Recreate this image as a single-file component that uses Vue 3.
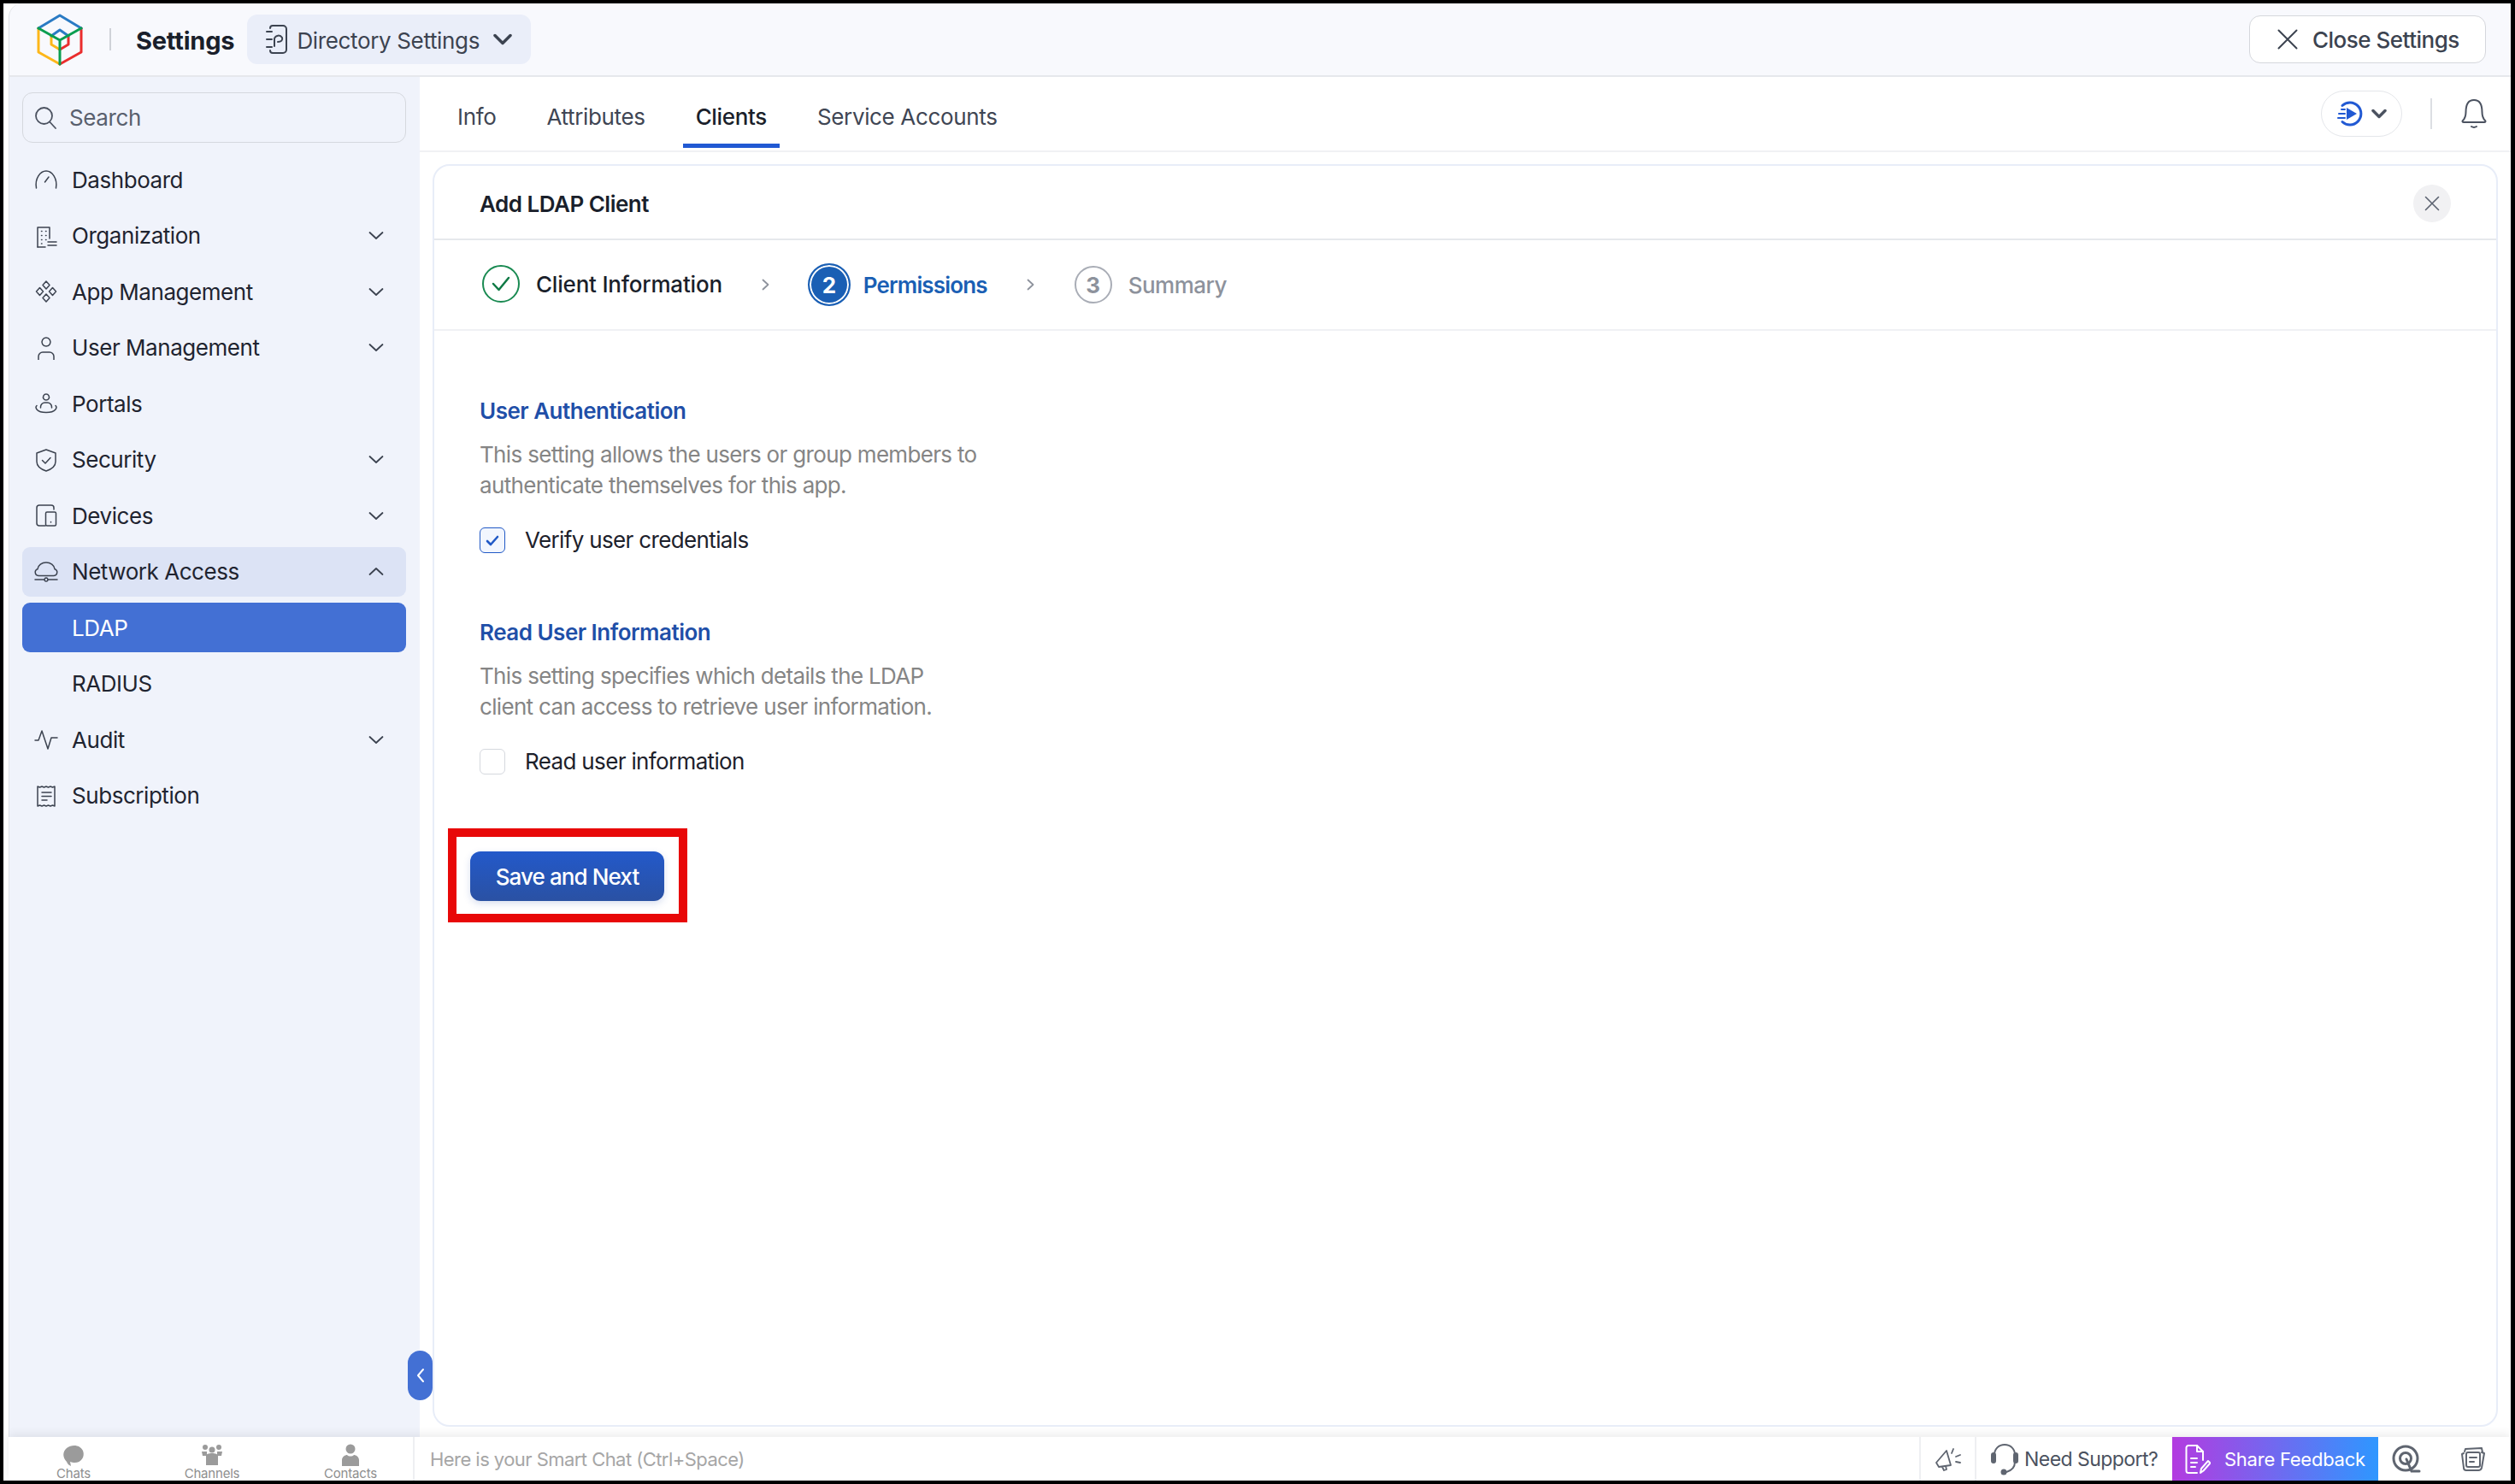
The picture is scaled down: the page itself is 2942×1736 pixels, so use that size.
<script setup>
const icons = {
  dash: ['M2.500 24C.5 13 7 4 14 4s13.500 9 11.500 20', 'M12.500 17l4.500-6'],
  org: ['M4 27V4h14v13', 'M4 27h9', 'M8.500 8.500h.5M13.500 8.500h.5M8.500 13.500h.5M13.500 13.500h.5M8.500 18.500h.5M13.500 18.500h.5M8.500 23h.5', 'M16 21h10M16 25h10'],
  app: ['M14 2l4 4.500-4 4.500-4-4.500z', 'M6.500 9.500l4 4.500-4 4.500-4-4.500z', 'M21.500 9.500l4 4.500-4 4.500-4-4.500z', 'M14 17l4 4.500-4 4.500-4-4.500z'],
  user: ['M14 2a5 5 0 1 0 .01 0z', 'M5 28v-4a5 5 0 0 1 5-5h8a5 5 0 0 1 5 5v4'],
  portal: ['M14 3a3.500 3.500 0 1 0 .01 0z', 'M7.500 19v-1a5 5 0 0 1 5-5h3a5 5 0 0 1 5 5v1', 'M3 16.500c-2 2-1 8 11 8s13-6 11-8'],
  shield: ['M14 2l11 4v10c0 6-5 9-11 11C8 25 3 22 3 16V6z', 'M9.500 14.500l3.500 3.500 6-6.500'],
  device: ['M13 26H6a3 3 0 0 1-3-3V5a3 3 0 0 1 3-3h14a3 3 0 0 1 3 3v2', 'M15 10h9a1.500 1.500 0 0 1 1.500 1.500v13A1.500 1.500 0 0 1 24 26h-9a1.500 1.500 0 0 1-1.500-1.500v-13A1.500 1.500 0 0 1 15 10z', 'M19.500 21.500v.5'],
  cloud: ['M6 18.500H5a4 4 0 0 1-1-7.800C4.500 6 9 3 14 3s9.500 3 10 7.700a4 4 0 0 1-1 7.800z', 'M1 23h11M16 23h11', 'M14 21a2 2 0 1 0 .01 0z'],
  audit: ['M1 15h4l4-11 7 21 4-13h7'],
  receipt: ['M4 3l2.500 1 2.500-1 2.500 1 2.500-1 2.500 1 2.500-1 2.500 1 2.500-1v23l-2.500-1-2.500 1-2.500-1-2.500 1-2.500-1-2.500 1-2.500-1-2.500 1z', 'M9 10h11M9 14.500h11M9 19h6']
}

const nav = [
  { label: 'Dashboard', icon: 'dash' },
  { label: 'Organization', icon: 'org', caret: 'down' },
  { label: 'App Management', icon: 'app', caret: 'down' },
  { label: 'User Management', icon: 'user', caret: 'down' },
  { label: 'Portals', icon: 'portal' },
  { label: 'Security', icon: 'shield', caret: 'down' },
  { label: 'Devices', icon: 'device', caret: 'down' },
  { label: 'Network Access', icon: 'cloud', caret: 'up', open: true },
  { label: 'LDAP', active: true },
  { label: 'RADIUS' },
  { label: 'Audit', icon: 'audit', caret: 'down' },
  { label: 'Subscription', icon: 'receipt' }
]

const tabs = [
  { label: 'Info' },
  { label: 'Attributes' },
  { label: 'Clients', active: true },
  { label: 'Service Accounts' }
]

const sections = [
  { title: 'User Authentication', lines: ['This setting allows the users or group members to', 'authenticate themselves for this app.'], check: 'Verify user credentials', on: true },
  { title: 'Read User Information', lines: ['This setting specifies which details the LDAP', 'client can access to retrieve user information.'], check: 'Read user information', on: false }
]
</script>

<template>
  <div class="shell">
    <div class="window">
      <header class="topbar">
        <svg class="logo" viewBox="43 17 54 61" width="54" height="61" fill="none" stroke-width="3" stroke-linecap="round" stroke-linejoin="round">
          <path stroke="#fdb71a" d="M45 34v28l25 14M60 43v10l10 6" />
          <path stroke="#ea2d2d" d="M95 34v28L70 76M80 43v10l-10 6" />
          <path stroke="#2a7bc4" d="M45 34l25-15 25 15M60 43l10-7 10 7" />
          <path stroke="#0a9e50" d="M45 34l25 14 25-14M70 48v28" />
        </svg>
        <span class="logo-sep"></span>
        <span class="app-title">Settings</span>
        <button class="dir-pill">
          <svg width="26" height="36" viewBox="0 0 26 36" fill="none" stroke="#3c4350" stroke-width="2" stroke-linecap="round">
            <path d="M5 5a3 3 0 0 1 3-3h12a4 4 0 0 1 4 4v24a4 4 0 0 1-4 4H8a3 3 0 0 1-3-3" />
            <path d="M1 9h6M1 18h6M1 27h6" />
            <path d="M10 26v-9a5 5 0 0 1 9-1c1 3-1 5-5 5" />
          </svg>
          <span>Directory Settings</span>
          <svg width="22" height="14" viewBox="0 0 22 14" fill="none" stroke="#3c4350" stroke-width="3.500" stroke-linecap="round" stroke-linejoin="round"><path d="M2 2.500l9 9 9-9" /></svg>
        </button>
        <button class="close-settings">
          <svg width="24" height="24" viewBox="0 0 24 24" fill="none" stroke="#3c4350" stroke-width="2" stroke-linecap="round"><path d="M1.500 1.500l21 21M22.500 1.500l-21 21" /></svg>
          <span>Close Settings</span>
        </button>
      </header>

      <div class="body">
        <aside class="sidebar">
          <div class="search">
            <svg width="30" height="30" viewBox="0 0 30 30" fill="none" stroke="#4b5260" stroke-width="1.800" stroke-linecap="round"><circle cx="12.500" cy="12.500" r="9.500" /><path d="M19.500 20l6.500 7" /></svg>
            <span>Search</span>
          </div>
          <nav class="nav">
            <div v-for="item in nav" :key="item.label" class="nav-row" :class="{ open: item.open, active: item.active }">
              <svg class="nav-ico" width="28" height="28" viewBox="0 0 28 28" fill="none" stroke="#3c4350" stroke-width="1.500" stroke-linecap="round" stroke-linejoin="round">
                <template v-if="item.icon"><path v-for="d in icons[item.icon]" :key="d" :d="d" /></template>
              </svg>
              <span class="nav-label">{{ item.label }}</span>
              <svg v-if="item.caret" class="caret" width="18" height="11" viewBox="0 0 18 11" fill="none" stroke="#3c4350" stroke-width="1.800" stroke-linecap="round" stroke-linejoin="round">
                <path :d="item.caret === 'down' ? 'M1.500 2l7.500 7 7.500-7' : 'M1.500 9l7.500-7 7.500 7'" />
              </svg>
            </div>
          </nav>
          <div class="collapse">
            <svg width="10" height="20" viewBox="0 0 10 20" fill="none" stroke="#fff" stroke-width="2" stroke-linecap="round" stroke-linejoin="round"><path d="M8 3L2 10l6 7" /></svg>
          </div>
        </aside>

        <main class="main">
          <div class="tabbar">
            <div class="tabs">
              <div v-for="t in tabs" :key="t.label" class="tab" :class="{ active: t.active }">{{ t.label }}</div>
            </div>
            <div class="tab-tools">
              <button class="play-pill">
                <svg width="32" height="30" viewBox="0 0 32 30" fill="none">
                  <path d="M6 5.500A13 13 0 1 1 6 24.500" stroke="#2159d3" stroke-width="3" stroke-linecap="round" />
                  <path d="M11 8l12 7-12 7z" fill="#2159d3" />
                  <path d="M5 10h4M2 15h7M1 20h8" stroke="#2159d3" stroke-width="2" stroke-linecap="round" />
                </svg>
                <svg width="18" height="12" viewBox="0 0 18 12" fill="none" stroke="#4b5260" stroke-width="3.500" stroke-linecap="round" stroke-linejoin="round"><path d="M2 2.500l7 7 7-7" /></svg>
              </button>
              <span class="tool-sep"></span>
              <svg width="32" height="36" viewBox="0 0 32 36" fill="none" stroke="#4b5260" stroke-width="2" stroke-linecap="round" stroke-linejoin="round">
                <path d="M3 26c3-3 3.500-6 3.500-10C6.500 7 10 2 16 2s9.500 5 9.500 14c0 4 .500 7 3.500 10 1 1 .500 2-1 2H4c-1.500 0-2-1-1-2z" />
                <path d="M13 33c2 1.300 4 1.300 6 0" />
              </svg>
            </div>
          </div>

          <section class="card">
            <div class="card-head">
              <h1>Add LDAP Client</h1>
              <button class="card-close">
                <svg width="18" height="18" viewBox="0 0 18 18" fill="none" stroke="#5b6270" stroke-width="1.600" stroke-linecap="round"><path d="M1.500 1.500l15 15M16.500 1.500l-15 15" /></svg>
              </button>
            </div>

            <div class="steps">
              <div class="step done">
                <span class="bubble">
                  <svg width="22" height="18" viewBox="0 0 22 18" fill="none" stroke="#0f7a45" stroke-width="2.500" stroke-linecap="round" stroke-linejoin="round"><path d="M2 9l6.500 7L20 2" /></svg>
                </span>
                <span class="step-text">Client Information</span>
              </div>
              <svg class="step-arrow first" width="9" height="14" viewBox="0 0 9 14" fill="none" stroke="#8d929c" stroke-width="1.800" stroke-linecap="round" stroke-linejoin="round"><path d="M1.500 1.500l6 5.500-6 5.500" /></svg>
              <div class="step current">
                <span class="bubble">2</span>
                <span class="step-text">Permissions</span>
              </div>
              <svg class="step-arrow second" width="9" height="14" viewBox="0 0 9 14" fill="none" stroke="#8d929c" stroke-width="1.800" stroke-linecap="round" stroke-linejoin="round"><path d="M1.500 1.500l6 5.500-6 5.500" /></svg>
              <div class="step todo">
                <span class="bubble">3</span>
                <span class="step-text">Summary</span>
              </div>
            </div>

            <div class="form">
              <div v-for="s in sections" :key="s.title" class="block">
                <h2>{{ s.title }}</h2>
                <p v-for="l in s.lines" :key="l">{{ l }}</p>
                <label class="check-row">
                  <span class="box" :class="{ on: s.on }">
                    <svg v-if="s.on" width="16" height="13" viewBox="0 0 16 13" fill="none" stroke="#2159c6" stroke-width="2.600" stroke-linecap="round" stroke-linejoin="round"><path d="M2 7l4 4 8-9" /></svg>
                  </span>
                  <span>{{ s.check }}</span>
                </label>
              </div>
              <div class="highlight">
                <button class="primary">Save and Next</button>
              </div>
            </div>
          </section>
        </main>
      </div>

      <footer class="bottombar">
        <div class="chat-tabs">
          <div class="chat-tab">
            <svg width="28" height="26" viewBox="0 0 28 26" fill="#9b9b9b">
              <path d="M6 21c-5-5-5-12 0-16 6-5 16-4 19 3 3 8-3 15-11 14-2 0-3-1-4-1l1 5c-3-1-4-3-5-5z" />
            </svg>
            <span>Chats</span>
          </div>
          <div class="chat-tab">
            <svg width="26" height="26" viewBox="0 0 26 26" fill="#9b9b9b">
              <circle cx="5" cy="4" r="3" /><circle cx="21" cy="4" r="3" /><circle cx="13" cy="7" r="3.500" />
              <path d="M1 9h6v5H2zM19 9h6l-1 5h-5zM6 14c0-2 3-3 7-3s7 1 7 3v11H6z" />
            </svg>
            <span>Channels</span>
          </div>
          <div class="chat-tab">
            <svg width="24" height="26" viewBox="0 0 24 26" fill="#9b9b9b">
              <circle cx="12" cy="6" r="5.500" /><path d="M2 26v-7c0-4 4-6 6-6 2 2 6 2 8 0 2 0 6 2 6 6v7z" />
            </svg>
            <span>Contacts</span>
          </div>
        </div>
        <div class="smart-chat">Here is your Smart Chat (Ctrl+Space)</div>
        <div class="bar-tools">
          <div class="cell megaphone">
            <svg width="32" height="32" viewBox="0 0 32 32" fill="none" stroke="#5f6570" stroke-width="1.800" stroke-linecap="round" stroke-linejoin="round">
              <path d="M2 20L14 6l5 17-14 2zM9 25l2 4 3-1-1-4" />
              <path d="M22 4l-2 5M25 13l5-2M25 19l5 1" />
            </svg>
          </div>
          <div class="cell support">
            <svg width="32" height="38" viewBox="0 0 32 38" fill="none" stroke="#5f6570" stroke-width="2" stroke-linecap="round">
              <path d="M4 14C4 7 9 2 16 2s12 5 12 12M28 22c0 6-3 10-10 12" />
              <rect x="1" y="12" width="4" height="11" rx="2" fill="#5f6570" />
              <rect x="27" y="12" width="4" height="11" rx="2" fill="#5f6570" />
              <circle cx="15" cy="34" r="2.500" fill="#5f6570" />
            </svg>
            <span>Need Support?</span>
          </div>
          <div class="feedback">
            <svg width="30" height="36" viewBox="0 0 30 36" fill="none" stroke="#fff" stroke-width="2" stroke-linecap="round" stroke-linejoin="round">
              <path d="M14 34H4a2.500 2.500 0 0 1-2.500-2.500v-27A2.500 2.500 0 0 1 4 2h10l7 7v10" />
              <path d="M14 2v7h7M7 17h7M7 22h7M7 27h5" />
              <path d="M18 34l1-5 8-9 2.500 2.500-8 9z" />
            </svg>
            <span>Share Feedback</span>
          </div>
          <div class="cell first-plain">
            <svg width="34" height="34" viewBox="0 0 34 34" fill="none" stroke="#5f6570" stroke-width="3" stroke-linecap="round">
              <circle cx="16" cy="16" r="14" /><circle cx="16" cy="16" r="6.500" /><path d="M17 17l6 14h9" />
            </svg>
          </div>
          <div class="cell plain">
            <svg width="30" height="30" viewBox="0 0 30 30" fill="none" stroke="#5f6570" stroke-width="2" stroke-linecap="round" stroke-linejoin="round">
              <path d="M4 8l-2 1 2 16a3 3 0 0 0 3 3h14a4 4 0 0 0 4-3l3-17-3-1" />
              <path d="M5 6l1-3 19-1 1 5" />
              <rect x="7" y="7" width="16" height="17" rx="2" />
              <path d="M11 13h8M11 18h5" />
            </svg>
          </div>
        </div>
      </footer>
    </div>
  </div>
</template>

<style>
html, body { margin: 0; padding: 0; }
</style>

<style scoped>
* { box-sizing: border-box; }
button { font-family: inherit; border: 0; padding: 0; margin: 0; }

.shell {
  width: 2942px;
  height: 1736px;
  background: #000;
  padding: 4px 5px 4px 4px;
  font-family: Inter, "Noto Sans", sans-serif;
  color: #1d212b;
  font-size: 26px;
}
.window {
  height: 100%;
  background: #fff;
  padding-left: 6px;
  display: flex;
  flex-direction: column;
  overflow: hidden;
}

.topbar {
  height: 86px;
  flex: none;
  display: flex;
  align-items: center;
  background: #f8f9fd;
  border-left: 1px solid #dfe1e6;
  border-bottom: 2px solid #e6e8ec;
  border-top-left-radius: 16px;
  padding-left: 32px;
  padding-right: 29px;
}
.logo { flex: none; }
.logo-sep { width: 2px; height: 26px; background: #cfd2d8; margin-left: 31px; }
.app-title { margin-left: 29px; padding-top: 2px; font-weight: 700; font-size: 29px; color: #1a1f2b; letter-spacing: -.2px; }
.dir-pill {
  margin-left: 15px;
  height: 58px;
  width: 332px;
  border-radius: 12px;
  background: #eaeef9;
  display: flex;
  align-items: center;
  padding-left: 22px;
  color: #3c4350;
  font-size: 26px;
}
.dir-pill span { margin-left: 10px; padding-top: 2px; letter-spacing: -.35px; white-space: nowrap; }
.dir-pill svg:last-child { margin-left: 16px; }
.close-settings {
  margin-left: auto;
  width: 277px;
  height: 56px;
  background: #fff;
  border: 1.500px solid #d5d7dc;
  border-radius: 13px;
  display: flex;
  align-items: center;
  padding-left: 32px;
  color: #3c4350;
  font-size: 26px;
  font-weight: 500;
}
.close-settings span { margin-left: 17px; letter-spacing: -.5px; white-space: nowrap; }

.body { flex: 1; display: flex; min-height: 0; }

.sidebar {
  position: relative;
  width: 481px;
  flex: none;
  background: #f0f3fb;
  border-left: 1px solid #dfe1e6;
  padding: 18px 16px 0 15px;
}
.search {
  height: 59px;
  border: 1.500px solid #d5d8de;
  border-radius: 12px;
  display: flex;
  align-items: center;
  padding-left: 12px;
  color: #59606e;
  letter-spacing: -.4px;
}
.search span { margin-left: 12px; }
.nav { margin-top: 14px; display: flex; flex-direction: column; gap: 7.500px; }
.nav-row {
  height: 58px;
  border-radius: 9px;
  display: flex;
  align-items: center;
  padding: 0 26px 0 14px;
  color: #1f2430;
  letter-spacing: -.45px;
}
.nav-row.open { background: #dce3f5; }
.nav-row.active { background: #4370d4; color: #fff; }
.nav-ico { flex: none; }
.nav-label { margin-left: 16px; white-space: nowrap; }
.caret { margin-left: auto; flex: none; }
.collapse {
  position: absolute;
  right: -15px;
  bottom: 43px;
  width: 29px;
  height: 58px;
  border-radius: 15px;
  background: #4370d4;
  display: flex;
  align-items: center;
  justify-content: center;
  z-index: 2;
}

.main { flex: 1; min-width: 0; display: flex; flex-direction: column; padding-bottom: 12px; }
.tabbar {
  height: 88px;
  flex: none;
  display: flex;
  border-bottom: 2px solid #f0f1f4;
  padding-left: 29px;
  padding-right: 27px;
}
.tabs { display: flex; }
.tab {
  height: 83px;
  padding: 14px 15px 0;
  margin-right: 29px;
  display: flex;
  align-items: center;
  border-bottom: 5px solid transparent;
  color: #3f4654;
  letter-spacing: -.35px;
  white-space: nowrap;
}
.tab.active { color: #1a1f2b; font-weight: 500; border-bottom-color: #2159d3; }
.tab-tools { margin-left: auto; display: flex; align-items: center; }
.play-pill {
  width: 95px;
  height: 54px;
  border-radius: 27px;
  background: #fff;
  border: 1.500px solid #e4e6ea;
  display: flex;
  align-items: center;
  justify-content: center;
  gap: 8px;
}
.tool-sep { width: 2px; height: 36px; background: #dcdee3; margin: 0 33px; }

.card {
  flex: 1;
  margin: 14px 15px 0 15px;
  border: 2px solid #e8edf8;
  border-radius: 20px;
  display: flex;
  flex-direction: column;
  min-height: 0;
}
.card-head {
  height: 87px;
  flex: none;
  display: flex;
  align-items: center;
  justify-content: space-between;
  border-bottom: 2px solid #e6e8ec;
  padding-left: 53px;
  padding-right: 53px;
}
.card-head h1 { margin: 0; padding-top: 3px; font-size: 26px; font-weight: 600; color: #1a1f2b; letter-spacing: -.5px; }
.card-close {
  width: 44px;
  height: 44px;
  margin-top: 2px;
  border-radius: 50%;
  background: #f1f1f3;
  display: flex;
  align-items: center;
  justify-content: center;
}

.steps {
  height: 106px;
  flex: none;
  display: flex;
  align-items: center;
  border-bottom: 2px solid #f0f1f4;
  padding-left: 56px;
}
.step { display: flex; align-items: center; white-space: nowrap; }
.bubble {
  width: 44px;
  height: 44px;
  border-radius: 50%;
  display: flex;
  align-items: center;
  justify-content: center;
  font-weight: 700;
  flex: none;
}
.step-text { letter-spacing: -.5px; }
.done .bubble { border: 2px solid #1a8a52; }
.done .step-text { margin-left: 19px; color: #1a1f2b; font-weight: 500; letter-spacing: -.2px; }
.done { margin-top: -2px; }
.step-arrow { flex: none; }
.step-arrow.first { margin-left: 46px; }
.current { margin-left: 45px; }
.current .bubble {
  width: 50px;
  height: 50px;
  background: #1a5fb4;
  color: #fff;
  border: 2px solid #1a5fb4;
  box-shadow: inset 0 0 0 2px #fff;
}
.current .step-text { margin-left: 15px; color: #1a5fb4; font-weight: 600; letter-spacing: -.85px; }
.step-arrow.second { margin-left: 46px; }
.todo { margin-left: 47px; }
.todo .bubble { border: 2px solid #a9adb6; color: #8d929c; }
.todo .step-text { margin-left: 19px; color: #8d929c; font-weight: 500; }

.form { padding: 76px 0 0 53px; }
.block { margin-bottom: 72px; }
.block + .block { margin-bottom: 60px; }
.block h2 { margin: 0 0 15px; font-size: 26px; line-height: 36px; font-weight: 600; color: #1f4fa8; letter-spacing: -.5px; }
.block p { margin: 0; font-size: 26px; line-height: 36px; color: #858585; letter-spacing: -.67px; }
.check-row { display: flex; align-items: center; margin-top: 28px; color: #1d212b; letter-spacing: -.65px; line-height: 36px; }
.box {
  width: 30px;
  height: 30px;
  border: 1.500px solid #d5d8de;
  border-radius: 6px;
  background: #fff;
  display: flex;
  align-items: center;
  justify-content: center;
  margin-right: 23px;
}
.box.on { border-color: #2159c6; background: #f2f6fe; }
.highlight {
  margin-left: -37px;
  width: 280px;
  height: 110px;
  border: 10px solid #e80808;
  padding: 17px 0 0 16px;
}
.primary {
  width: 227px;
  height: 58px;
  border-radius: 12px;
  background: linear-gradient(#2359ca, #2a51a3);
  box-shadow: 0 3px 8px rgba(40, 80, 170, .18);
  color: #fff;
  font-size: 26px;
  font-weight: 500;
  letter-spacing: -.9px;
}

.bottombar {
  position: relative;
  height: 51px;
  flex: none;
  display: flex;
  background: #fff;
  box-shadow: 0 -4px 10px rgba(0, 0, 0, .07);
  z-index: 3;
}
.chat-tabs {
  width: 475px;
  flex: none;
  display: flex;
  border-right: 2px solid #eeeff2;
}
.chat-tab {
  flex: 0 0 162px;
  display: flex;
  flex-direction: column;
  align-items: center;
  justify-content: flex-end;
  color: #8e8e8e;
  font-size: 15px;
  line-height: 15px;
  letter-spacing: -.2px;
  padding-bottom: 1px;
}
.chat-tab:first-child { margin-left: -5px; }
.chat-tab svg { margin-bottom: 1px; }
.smart-chat { margin-left: 18px; align-self: center; font-size: 22px; color: #a6a6a6; letter-spacing: -.55px; white-space: nowrap; }
.bar-tools { margin-left: auto; display: flex; align-items: stretch; }
.cell { display: flex; align-items: center; justify-content: center; }
.megaphone { width: 67px; border-left: 2px solid #eeeff2; border-right: 2px solid #eeeff2; }
.support { width: 229px; justify-content: flex-start; padding-left: 17px; color: #4b5260; font-size: 23px; letter-spacing: -.55px; white-space: nowrap; }
.support span { margin-left: 7px; }
.feedback {
  width: 241px;
  display: flex;
  align-items: center;
  padding-left: 15px;
  background: linear-gradient(90deg, #b33be0, #2e97ff);
  color: #fff;
  font-size: 22px;
  letter-spacing: -.25px;
  white-space: nowrap;
}
.feedback span { margin-left: 16px; }
.first-plain { width: 66px; }
.plain { width: 89px; }
</style>
